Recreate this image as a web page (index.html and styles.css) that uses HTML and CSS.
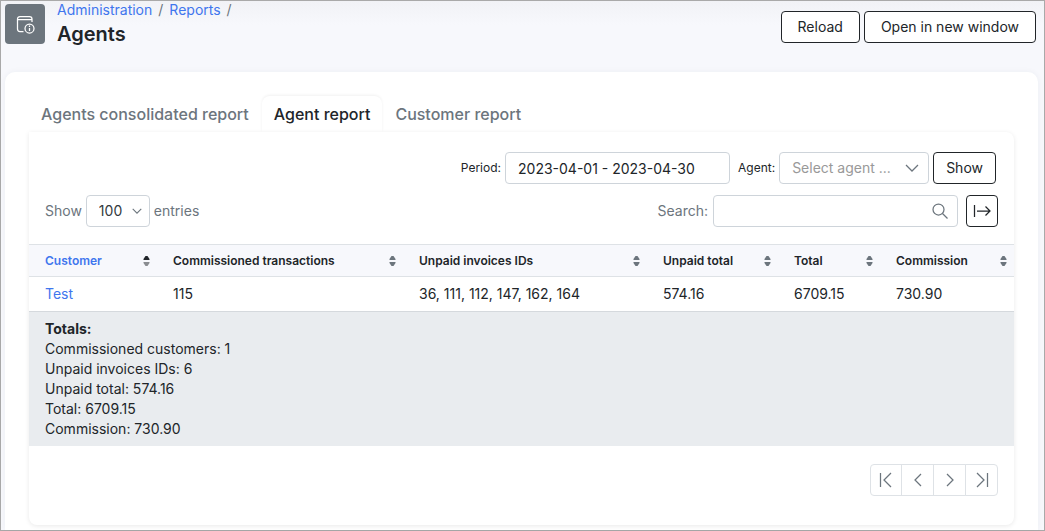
FILE: index.html
```html
<!DOCTYPE html>
<html lang="en">
<head>
<meta charset="utf-8">
<meta name="viewport" content="width=device-width, initial-scale=1">
<title>Agents</title>
<link rel="stylesheet" href="styles.css">
</head>
<body>
<svg class="sprite" aria-hidden="true">
  <symbol id="sort" viewBox="0 0 7 10"><path class="up" d="M2.500 0h2L6.500 3v1h-6V3z"/><path class="down" d="M.500 6h6v1l-2 3h-2l-2-3z"/></symbol>
  <symbol id="chevron" viewBox="0 0 14 14"><path d="M1 4l6 6 6-6"/></symbol>
</svg>
<div class="page">
  <header class="topbar">
    <span class="page-icon">
      <svg width="20" height="20" viewBox="0 0 20 20" aria-hidden="true"><path d="M8.500 17.500H5A2.500 2.500 0 0 1 2.500 15V5A2.500 2.500 0 0 1 5 2.500h9.500A2.500 2.500 0 0 1 17 5v3M2.500 5.500H17"/><circle cx="14.500" cy="14.500" r="4.500"/><path d="M14.500 14v3M14.500 11.500V13"/></svg>
    </span>
    <div class="heading">
      <nav class="crumbs" aria-label="Breadcrumb"><a href="#">Administration</a><span>/</span><a href="#">Reports</a><span>/</span></nav>
      <h1>Agents</h1>
    </div>
    <div class="actions">
      <button class="btn" type="button">Reload</button>
      <button class="btn" type="button">Open in new window</button>
    </div>
  </header>
  <main class="card">
    <nav class="tabs">
      <a class="tab" href="#">Agents consolidated report</a>
      <a class="tab active" href="#" aria-current="page">Agent report</a>
      <a class="tab" href="#">Customer report</a>
    </nav>
    <section class="panel">
      <form class="filters">
        <label class="small" for="period">Period:</label>
        <input class="field period" id="period" type="text" value="2023-04-01 - 2023-04-30">
        <label class="small" for="agent">Agent:</label>
        <span class="select-wrap agent">
          <select class="field" id="agent"><option>Select agent ...</option></select>
          <svg class="arrow" width="14" height="14"><use href="#chevron"/></svg>
        </span>
        <button class="btn show" type="button">Show</button>
      </form>
      <div class="tools">
        <label for="entries">Show</label>
        <span class="select-wrap entries">
          <select class="field" id="entries"><option>100</option></select>
          <svg class="arrow" width="10" height="10"><use href="#chevron"/></svg>
        </span>
        <span>entries</span>
        <label class="search-label" for="search">Search:</label>
        <span class="search-wrap">
          <input class="field" id="search" type="text">
          <svg class="lens" width="16" height="16" viewBox="0 0 16 16" aria-hidden="true"><circle cx="6.500" cy="6.500" r="5.500"/><path d="M10.500 10.500l5 5"/></svg>
        </span>
        <button class="btn export" type="button" aria-label="Export">
          <svg width="18" height="14" viewBox="0 0 18 14" aria-hidden="true"><path d="M1.500 1v12M4 7h13M12.500 2.500L17 7l-4.500 4.500"/></svg>
        </button>
      </div>
      <table>
        <colgroup><col class="c-customer"><col class="c-trans"><col class="c-ids"><col class="c-unpaid"><col class="c-total"><col class="c-commission"></colgroup>
        <thead>
          <tr>
            <th class="sorted"><div>Customer<svg width="7" height="10"><use href="#sort"/></svg></div></th>
            <th><div>Commissioned transactions<svg width="7" height="10"><use href="#sort"/></svg></div></th>
            <th><div>Unpaid invoices IDs<svg width="7" height="10"><use href="#sort"/></svg></div></th>
            <th><div>Unpaid total<svg width="7" height="10"><use href="#sort"/></svg></div></th>
            <th><div>Total<svg width="7" height="10"><use href="#sort"/></svg></div></th>
            <th><div>Commission<svg width="7" height="10"><use href="#sort"/></svg></div></th>
          </tr>
        </thead>
        <tbody>
          <tr><td><a href="#">Test</a></td><td>115</td><td>36, 111, 112, 147, 162, 164</td><td>574.16</td><td>6709.15</td><td>730.90</td></tr>
        </tbody>
        <tfoot>
          <tr><td colspan="6"><strong>Totals:</strong><br>Commissioned customers: 1<br>Unpaid invoices IDs: 6<br>Unpaid total: 574.16<br>Total: 6709.15<br>Commission: 730.90</td></tr>
        </tfoot>
      </table>
      <nav class="pager" aria-label="Pagination">
        <button type="button" aria-label="First"><svg width="16" height="16" viewBox="0 0 16 16"><path d="M2.500 1v14M13 1L6 8l7 7"/></svg></button>
        <button type="button" aria-label="Previous"><svg width="16" height="16" viewBox="0 0 16 16"><path d="M11 2L5 8l6 6"/></svg></button>
        <button type="button" aria-label="Next"><svg width="16" height="16" viewBox="0 0 16 16"><path d="M5 2l6 6-6 6"/></svg></button>
        <button type="button" aria-label="Last"><svg width="16" height="16" viewBox="0 0 16 16"><path d="M13.500 1v14M3 1l7 7-7 7"/></svg></button>
      </nav>
    </section>
  </main>
</div>
</body>
</html>
```
FILE: styles.css
```css
* { box-sizing: border-box; }
body {
  margin: 0;
  font: 14px/20px Inter, "Liberation Sans", sans-serif;
  color: #212529;
}
a { color: #3f76ee; text-decoration: none; }
svg { fill: none; stroke: currentColor; stroke-width: 1.25; flex: none; }
button, input, select { font: inherit; color: inherit; }
.sprite { position: absolute; width: 0; height: 0; }

.page {
  min-height: 100vh;
  display: flex;
  flex-direction: column;
  padding: 0 6px 0 4px;
  border: 1px solid #a9a9a9;
  background: linear-gradient(#f1f2f6, #f7f8fc 24px);
}
.topbar { display: flex; align-items: flex-start; height: 71px; padding-right: 2px; }
.page-icon {
  display: grid;
  place-items: center;
  width: 40px;
  height: 40px;
  margin-top: 3px;
  border-radius: 4px;
  background: #6c757d;
  color: #fff;
}
.heading { margin-left: 12px; }
.crumbs { display: flex; gap: 6px; color: #6c757d; line-height: 18px; }
h1 { margin: 2px 0 0; font-size: 20px; line-height: 26px; font-weight: 600; }
.actions { display: flex; gap: 4px; margin: 10px 0 0 auto; }

.btn {
  height: 32px;
  padding: 0 16px;
  border: 1px solid #212529;
  border-radius: 4px;
  background: #fff;
}
.card {
  flex: 1;
  padding: 24px 24px 5px;
  border-radius: 10px 10px 0 0;
  background: #fff;
  box-shadow: 0 0 6px rgba(40, 50, 80, .05);
}
.tabs { display: flex; gap: 1px; }
.tab {
  padding: 8px 12px;
  border-radius: 8px 8px 0 0;
  font-size: 16px;
  font-weight: 500;
  color: #6c757d;
}
.tab.active { color: #212529; box-shadow: 0 -1px 3px rgba(0, 0, 0, .06); }
.panel {
  position: relative;
  border-radius: 0 8px 8px 8px;
  background: #fff;
  box-shadow: 0 1px 5px rgba(0, 0, 0, .09);
}

.field {
  width: 100%;
  height: 32px;
  padding: 0 12px;
  border: 1px solid #ced4da;
  border-radius: 4px;
  background: #fff;
  appearance: none;
}
.filters {
  display: flex;
  justify-content: flex-end;
  align-items: center;
  padding: 20px 18px 0 16px;
}
.small { font-size: 12px; margin-right: 4px; }
.period { width: 225px; margin-right: 8px; }
.select-wrap, .search-wrap { display: grid; align-items: center; }
.select-wrap > *, .search-wrap > * { grid-area: 1 / 1; }
.arrow, .lens { justify-self: end; pointer-events: none; color: #6c757d; }
.agent { width: 150px; margin-right: 4px; }
.agent .field { color: #999; }
.agent .arrow { margin-right: 10px; }
.show { padding: 0 12px; }
.tools {
  display: flex;
  align-items: center;
  padding: 11px 16px 17px;
  color: #6c757d;
}
.entries { width: 64px; margin: 0 4px; }
.entries .field { color: #343a40; }
.entries .arrow { margin-right: 8px; stroke-width: 1.5; }
.search-label { margin: 0 5px 0 auto; }
.search-wrap { width: 245px; margin-right: 8px; }
.lens { margin-right: 10px; }
.export { display: grid; place-items: center; width: 32px; padding: 0; color: #212529; }

table { width: 100%; border-collapse: separate; border-spacing: 0; table-layout: fixed; }
.c-customer { width: 128px; }
.c-trans { width: 246px; }
.c-ids { width: 244px; }
.c-unpaid { width: 131px; }
.c-total { width: 102px; }
.c-commission { width: 134px; }
th {
  padding: 6px 7px 5px 16px;
  border: solid #dee2e6;
  border-width: 1px 0;
  background: #f7f8fc;
  font-size: 12px;
  font-weight: 600;
  text-align: left;
}
th div { display: flex; justify-content: space-between; align-items: center; }
th svg { stroke: none; }
.sorted { color: #3f76ee; }
.sorted svg { --up: #212529; --down: #8a8d91; }
.up { fill: var(--up, #6c757d); }
.down { fill: var(--down, #6c757d); }
td { padding: 7px 16px; }
tfoot td { border-top: 1px solid #d5d9dd; background: #e9ecef; }
strong { font-weight: 700; }

.pager { display: flex; justify-content: flex-end; padding: 18px 16px 29px; }
.pager button {
  display: grid;
  place-items: center;
  width: 33px;
  height: 32px;
  margin-left: -1px;
  padding: 0;
  border: 1px solid #dee2e6;
  background: #fff;
  color: #6c757d;
}
.pager button:first-child { width: 32px; border-radius: 4px 0 0 4px; }
.pager button:last-child { border-radius: 0 4px 4px 0; }
```
